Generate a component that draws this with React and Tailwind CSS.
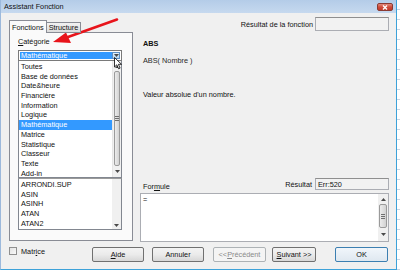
import React from "react";

const categories = [
  "Toutes",
  "Base de données",
  "Date&heure",
  "Financière",
  "Information",
  "Logique",
  "Mathématique",
  "Matrice",
  "Statistique",
  "Classeur",
  "Texte",
  "Add-in",
];

const functions = ["ARRONDI.SUP", "ASIN", "ASINH", "ATAN", "ATAN2", "ATANH"];

function Arrow({ up }) {
  return (
    <svg width="5" height="3" viewBox="0 0 5 3" className="block">
      {up ? <path d="M0 3 L2.5 0 L5 3 Z" fill="#4a4a4a" /> : <path d="M0 0 L2.5 3 L5 0 Z" fill="#4a4a4a" />}
    </svg>
  );
}

function Grip() {
  return (
    <div className="flex flex-col gap-[1px]">
      <div className="w-[4px] h-px bg-[#6f6f6f]" />
      <div className="w-[4px] h-px bg-[#6f6f6f]" />
      <div className="w-[4px] h-px bg-[#6f6f6f]" />
    </div>
  );
}

function Btn({ children, className, kind }) {
  let look = "border-[#707070] bg-gradient-to-b from-[#f3f3f3] via-[#ebebeb] to-[#d7d7d7] text-[#111]";
  if (kind === "ok") look = "border-[#3c7fb1] bg-gradient-to-b from-[#f1f6fb] to-[#dfe8f0] text-[#111]";
  if (kind === "off") look = "border-[#adb2b5] bg-[#f4f4f4] text-[#8a8a8a]";
  return (
    <div className={`h-[15px] rounded-[2px] border flex items-center justify-center shrink-0 ${look} ${className}`}>
      {children}
    </div>
  );
}

export default function App() {
  return (
    <div className="w-[400px] h-[272px] overflow-hidden bg-white relative font-['Liberation_Sans',Arial,sans-serif] text-[7.3px] leading-[9px] text-[#111]">
      <div className="flex h-[270px]">
        <div className="w-[397px] h-[270px] shrink-0 flex flex-col border-l border-r border-b border-l-[#9cb9dc] border-r-[#3da2d9] border-b-[#3da2d9] bg-[#f0f0f0]">
          {/* title bar */}
          <div className="h-[13px] shrink-0 flex items-center bg-gradient-to-b from-[#b4cce8] to-[#c6d9ef] pl-[3px] pr-[3px]">
            <span className="text-[7.3px] text-[#111]">Assistant Fonction</span>
            <div className="ml-auto mt-[1px] w-[16px] h-[8px] rounded-[2px] border border-[#8b3a32] bg-gradient-to-b from-[#e08a7d] via-[#cf4b3a] to-[#c23a2a] flex items-center justify-center">
              <svg width="6" height="5" viewBox="0 0 6 5">
                <path d="M1 0.5 L5 4.5 M5 0.5 L1 4.5" stroke="#fff" strokeWidth="1.4" />
              </svg>
            </div>
          </div>

          {/* body */}
          <div className="flex-1 flex flex-col pl-[8px]">
            <div className="flex items-start pt-[4px] h-[229px]">
              {/* left column */}
              <div className="w-[124px] shrink-0 pt-[3px] flex flex-col">
                <div className="flex items-end h-[13px] -mb-px relative z-10">
                  <div className="h-[13px] px-[2px] border border-b-0 border-[#898c95] bg-[#fafafa] flex items-center">
                    Fonctions
                  </div>
                  <div className="h-[11px] px-[2px] border border-l-0 border-[#898c95] bg-gradient-to-b from-[#f2f2f2] to-[#dcdcdc] flex items-center">
                    Structure
                  </div>
                </div>
                <div className="h-[209px] border border-[#898c95] bg-[#fafafa] pl-[8px] pt-[4px]">
                  <div className="leading-[9px]">
                    <span className="underline">C</span>atégorie
                  </div>
                  <div className="mt-[4px] w-[104px]">
                    {/* combo */}
                    <div className="h-[11px] border border-[#7a7a7a] bg-white flex p-px">
                      <div className="flex-1 bg-[#3399ff] text-white flex items-center pl-[1px]">Mathématique</div>
                      <div className="w-[8px] border border-[#5e8fc2] bg-gradient-to-b from-[#e3f1fb] to-[#b7d6ee] flex items-center justify-center">
                        <Arrow />
                      </div>
                    </div>
                    {/* dropdown */}
                    <div className="h-[117px] border border-[#828790] border-t-0 bg-white flex">
                      <div className="flex-1 flex flex-col pt-px">
                        {categories.map((c) => (
                          <div
                            key={c}
                            className={`h-[9.7px] leading-[9.7px] pl-[2px] ${c === "Mathématique" ? "bg-[#3399ff] text-white" : ""}`}
                          >
                            {c}
                          </div>
                        ))}
                      </div>
                      <div className="w-[9px] bg-[#f0f0f0] flex flex-col border-l border-[#e6e6e6]">
                        <div className="h-[10px] flex items-center justify-center">
                          <Arrow up />
                        </div>
                        <div className="flex-1 mx-px rounded-[2px] border border-[#9a9a9a] bg-gradient-to-r from-[#ececec] to-[#d2d2d2] flex items-center justify-center">
                          <Grip />
                        </div>
                        <div className="h-[11px] flex items-center justify-center">
                          <Arrow />
                        </div>
                      </div>
                    </div>
                    {/* function list */}
                    <div className="h-[52px] border border-[#828790] border-t-[#9a9a9a] bg-white flex overflow-hidden">
                      <div className="flex-1 flex flex-col pt-[1px]">
                        {functions.map((f) => (
                          <div key={f} className="h-[9.7px] leading-[9.7px] pl-[2px] shrink-0">
                            {f}
                          </div>
                        ))}
                      </div>
                      <div className="w-[9px] bg-[#f0f0f0] flex flex-col justify-end pb-[2px] items-center">
                        <Arrow />
                      </div>
                    </div>
                  </div>
                </div>
              </div>

              {/* right column */}
              <div className="ml-[7px] w-[249px] h-[225px] flex flex-col">
                <div className="flex items-center justify-end gap-[2px] h-[14px]">
                  <span>Résultat de la fonction</span>
                  <div className="w-[74px] h-[14px] border border-[#abadb3] border-t-[#8f8f8f] bg-[#f2f2f2]" />
                </div>
                <div className="pl-[3px]">
                  <div className="mt-[8px] font-bold">ABS</div>
                  <div className="mt-[8px] text-[#2a2a2a]">ABS( Nombre )</div>
                  <div className="mt-[25px]">Valeur absolue d'un nombre.</div>
                </div>
                <div className="mt-auto">
                  <div className="flex items-end justify-between h-[13px]">
                    <span className="pl-[3px]">
                      For<span className="underline">m</span>ule
                    </span>
                    <div className="flex items-center gap-[3px] self-start">
                      <span>Résultat</span>
                      <div className="w-[74px] h-[12px] border border-[#abadb3] border-t-[#8f8f8f] bg-[#f2f2f2] flex items-center pl-[2px]">
                        Err:520
                      </div>
                    </div>
                  </div>
                  <div className="mt-[2px] h-[49px] border border-[#abadb3] bg-white flex">
                    <div className="flex-1 pl-[2px] pt-[1px]">=</div>
                    <div className="w-[10px] bg-[#f0f0f0] flex flex-col items-center">
                      <div className="h-[10px] flex items-center justify-center">
                        <Arrow up />
                      </div>
                      <div className="h-[24px] w-[8px] rounded-[2px] border border-[#9a9a9a] bg-gradient-to-r from-[#ececec] to-[#d2d2d2] flex items-center justify-center">
                        <Grip />
                      </div>
                      <div className="flex-1 flex items-center justify-center">
                        <Arrow />
                      </div>
                    </div>
                  </div>
                </div>
              </div>
            </div>

            {/* bottom row */}
            <div className="flex items-start mt-[5px]">
              <div className="w-[83px] shrink-0 flex items-center gap-[4px] h-[8px]">
                <div className="w-[8px] h-[8px] border border-[#8f8f8f] bg-gradient-to-br from-[#e2e2e2] to-[#fafafa]" />
                <span>
                  Matr<span className="underline">i</span>ce
                </span>
              </div>
              <Btn className="w-[52px]">
                <span className="underline">A</span>ide
              </Btn>
              <Btn className="w-[52px] ml-[8px]">Annuler</Btn>
              <Btn className="w-[53px] ml-[9px]" kind="off">
                &lt;&lt; <span className="underline">P</span>récédent
              </Btn>
              <Btn className="w-[44px] ml-[6px]">
                <span className="underline">S</span>uivant &gt;&gt;
              </Btn>
              <Btn className="w-[53px] ml-[19px]" kind="ok">
                OK
              </Btn>
            </div>
          </div>
        </div>
        {/* spreadsheet sliver */}
        <div className="flex-1 flex flex-col">
          {Array.from({ length: 27 }).map((_, i) => (
            <div key={i} className="h-[10px] shrink-0 border-b border-[#c8d4e3]" />
          ))}
        </div>
      </div>

      {/* red annotation arrow */}
      <svg className="absolute left-0 top-0 pointer-events-none" width="130" height="50" viewBox="0 0 130 50">
        <path d="M117 19.5 L68 37" stroke="#e8141b" strokeWidth="2.6" strokeLinecap="round" />
        <path d="M53 42 L66 32.5 L71 43 Z" fill="#e8141b" />
      </svg>

      {/* mouse cursor */}
      <svg className="absolute left-[114px] top-[57px] pointer-events-none" width="9" height="13" viewBox="0 0 9 13">
        <path d="M0.5 0.5 L0.5 10 L2.8 7.8 L4.6 11.8 L6.1 11.1 L4.4 7.3 L7.5 7.3 Z" fill="#fff" stroke="#000" strokeWidth="0.8" />
      </svg>
    </div>
  );
}
